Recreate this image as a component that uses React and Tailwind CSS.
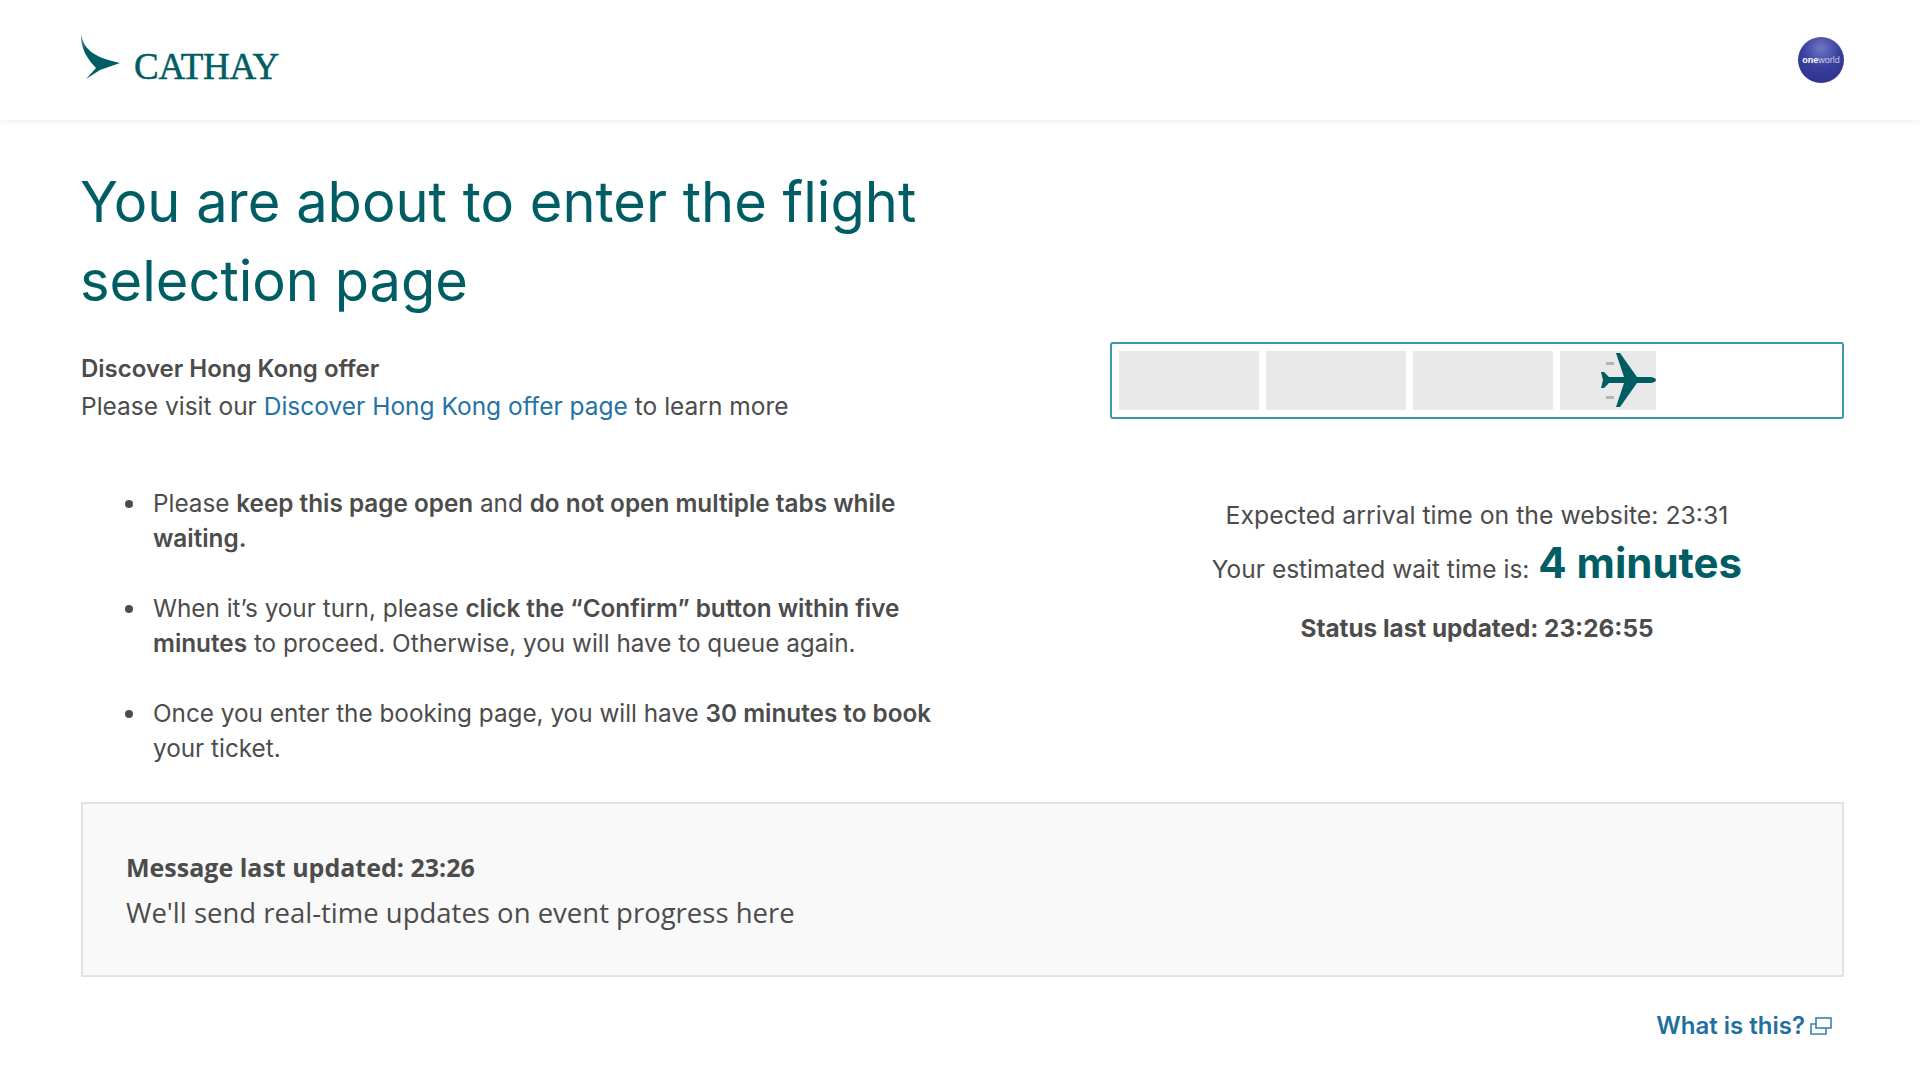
function Logo() {
  return (
    <div className="flex items-end">
      <svg width="42" height="48" viewBox="0 0 42 48" className="block">
        <defs>
          <linearGradient id="wing" x1="0" y1="0" x2="0" y2="1">
            <stop offset="0" stopColor="#005d63" stopOpacity="0.45" />
            <stop offset="0.35" stopColor="#005d63" />
            <stop offset="1" stopColor="#005d63" />
          </linearGradient>
        </defs>
        <path d="M1 0 C3 15 12 24 40 30 L20 37 L6 46 L16 35 C8 27 0 15 1 0Z" fill="url(#wing)" />
      </svg>
      <span className="ml-[12px] mb-[-5px] text-[37px] leading-[38px] text-[#005d63] font-['Liberation_Serif',serif] tracking-[-0.3px] [-webkit-text-stroke:0.5px_#005d63]">CATHAY</span>
    </div>
  );
}

function Oneworld() {
  return (
    <div className="w-[46px] h-[46px] rounded-full bg-[radial-gradient(circle_at_50%_25%,#7076c4_0%,#3a3f9e_45%,#2b2f85_100%)] flex items-center justify-center">
      <span className="text-[9px] leading-none text-white font-['Liberation_Sans',sans-serif]"><b>one</b><span className="font-light opacity-70">world</span></span>
    </div>
  );
}

function Plane() {
  return (
    <svg width="60" height="60" viewBox="0 0 60 60" className="absolute right-[-1px] top-[-1px]">
      <rect x="9" y="12" width="8" height="3" fill="#b4b4b4" />
      <rect x="9" y="46" width="8" height="3" fill="#b4b4b4" />
      <path d="M19 3 L23 3 L40 27 L54 27 Q59 28 59 30 Q59 32 54 33 L40 33 L23 57 L19 57 L27 33 L12 33 L7 38 L4 38 L6 30 L4 22 L7 22 L12 27 L27 27Z" fill="#005d63" />
    </svg>
  );
}

function Progress() {
  return (
    <div className="h-[77px] border-2 border-[#3f95ab] rounded-[3px] bg-white flex gap-[7px] px-[7px] py-[7px]">
      <div className="w-[140px] bg-[#e9e9e9]" />
      <div className="w-[140px] bg-[#e9e9e9]" />
      <div className="w-[140px] bg-[#e9e9e9]" />
      <div className="w-[96px] bg-[#e9e9e9] relative"><Plane /></div>
    </div>
  );
}

function Bullet({ children }) {
  return (
    <li className="flex gap-[20px]">
      <span className="w-[8px] h-[8px] mt-[14px] shrink-0 rounded-full bg-[#4c4c4c]" />
      <span className="w-[808px]">{children}</span>
    </li>
  );
}

export default function App() {
  return (
    <div className="min-h-[1080px] bg-white font-['Inter',sans-serif] text-[#4c4c4c]">
      <header className="h-[120px] flex items-start justify-between pl-[80px] pr-[76px] pt-[33px] shadow-[0_1px_6px_rgba(0,0,0,0.08)]">
        <Logo />
        <div className="mt-[4px]"><Oneworld /></div>
      </header>
      <main className="pl-[81px] pr-[76px]">
        <h1 className="mt-[43px] ml-[-1px] w-[960px] text-[56px] leading-[79px] text-[#005d63] font-normal">You are about to enter the flight selection page</h1>
        <div className="grid grid-cols-[1029px_734px] mt-[21px]">
          <div className="pt-[8px]">
            <p className="text-[24px] leading-[38px] font-semibold">Discover Hong Kong offer</p>
            <p className="text-[24.5px] leading-[37px]">Please visit our <a className="text-[#2573a4]">Discover Hong Kong offer page</a> to learn more</p>
            <ul className="mt-[61px] ml-[44px] text-[24.3px] leading-[35px] flex flex-col gap-[35px]">
              <Bullet>Please <b className="font-semibold">keep this page open</b> and <b className="font-semibold">do not open multiple tabs while waiting.</b></Bullet>
              <Bullet>When it’s your turn, please <b className="font-semibold">click the “Confirm” button within five minutes</b> to proceed. Otherwise, you will have to queue again.</Bullet>
              <Bullet>Once you enter the booking page, you will have <b className="font-semibold">30 minutes to book</b> your ticket.</Bullet>
            </ul>
          </div>
          <div>
            <Progress />
            <div className="mt-[77px] text-center">
              <p className="text-[24.8px] leading-[38px]">Expected arrival time on the website: 23:31</p>
              <p className="mt-[4px] text-[24.5px] leading-[50px]">Your estimated wait time is: <span className="text-[42px] font-bold text-[#005d63] ml-[2px]">4 minutes</span></p>
              <p className="mt-[15px] text-[24.3px] leading-[38px] font-bold">Status last updated: 23:26:55</p>
            </div>
          </div>
        </div>
        <section className="mt-[36px] h-[175px] border-2 border-[#e2e2e2] bg-[#f9f9f9] px-[43px] pt-[45px]">
          <p className="text-[25px] leading-[36px] font-bold font-['Open_Sans',sans-serif]">Message last updated: 23:26</p>
          <p className="mt-[9px] text-[27.5px] leading-[38px] font-['Open_Sans',sans-serif]">We'll send real-time updates on event progress here</p>
        </section>
        <div className="mt-[31px] pr-[12px] flex justify-end items-center text-[24px] leading-[36px] font-semibold text-[#1f6f9f]">
          What is this?
          <svg width="22" height="20" viewBox="0 0 22 20" fill="none" stroke="#3a82ad" strokeWidth="1.6" className="ml-[5px]">
            <rect x="6" y="2" width="15" height="10" />
            <path d="M6 8 H1 V18 H16 V12" />
          </svg>
        </div>
      </main>
    </div>
  );
}
